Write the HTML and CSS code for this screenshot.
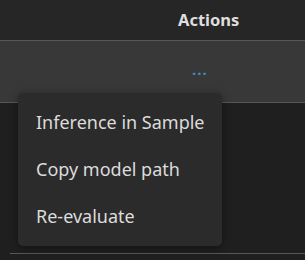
FILE: index.html
```html
<!DOCTYPE html>
<html lang="en">

<head>
    <meta charset="UTF-8">
    <title>Models</title>
    <link rel="stylesheet" href="styles.css">
</head>

<body>
    <div class="grid">
        <div class="head">
            <span class="head-cell">Actions</span>
        </div>
        <div class="row">
            <span class="more">···</span>
        </div>
        <div class="row-empty"></div>
    </div>

    <ul class="menu">
        <li>Inference in Sample</li>
        <li>Copy model path</li>
        <li>Re-evaluate</li>
    </ul>
</body>

</html>
```

FILE: styles.css
```css
* {
    margin: 0;
    padding: 0;
    box-sizing: border-box;
}

body {
    width: 305px;
    height: 260px;
    background-color: #1f1f1f;
    font-family: "Noto Sans", "Open Sans", sans-serif;
    color: #e0e0e0;
    position: relative;
    overflow: hidden;
}

.head {
    height: 41px;
    background-color: #262626;
    border-bottom: 1px solid #575757;
    display: flex;
    align-items: center;
    padding-left: 178px;
    padding-bottom: 2px;
}

.head-cell {
    font-size: 16.5px;
    font-weight: bold;
    color: #dedede;
}

.row {
    height: 62px;
    background-color: #383838;
    border-bottom: 1px solid #575757;
    display: flex;
    align-items: center;
    padding-left: 192px;
    padding-top: 2px;
}

.more {
    color: #4a86c8;
    font-size: 15px;
    font-weight: bold;
    letter-spacing: 1px;
}

.row-empty {
    height: 151px;
    margin-left: 10px;
    border-bottom: 1px solid #575757;
}

.menu {
    position: absolute;
    left: 18px;
    top: 93px;
    width: 204px;
    list-style: none;
    background-color: #2b2b2b;
    border-radius: 5px;
    box-shadow: 0 2px 8px rgba(0, 0, 0, 0.4);
    padding: 6px 0;
}

.menu li {
    height: 47px;
    line-height: 47px;
    padding-left: 18px;
    font-size: 18px;
    color: #dcdcdc;
}
```
